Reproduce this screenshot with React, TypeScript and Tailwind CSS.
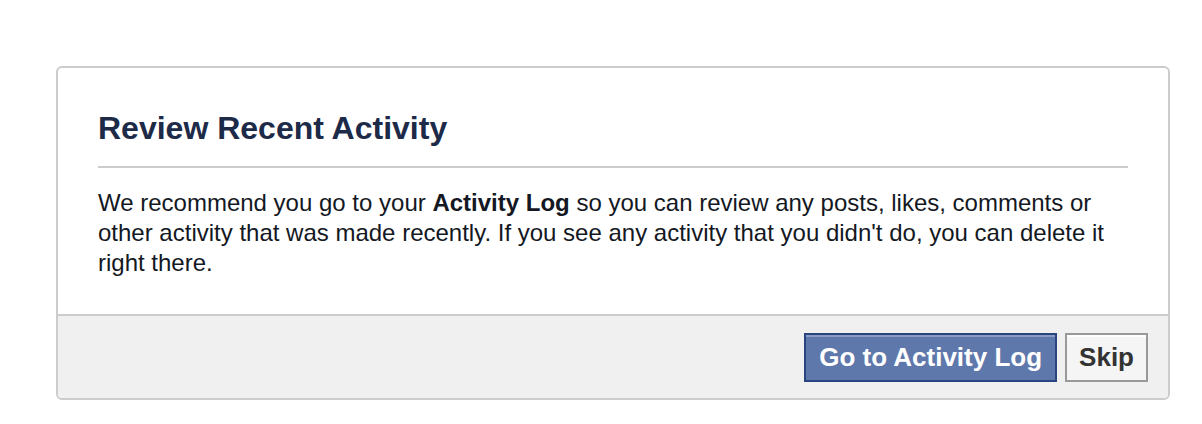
import React from "react";

export default function App() {
  return (
    <div className="w-[1202px] h-[424px] bg-white pt-[66px] pl-[56px]" style={{ fontFamily: '"Liberation Sans", Arial, sans-serif' }}>
      <div className="w-[1114px] h-[334px] border-2 border-[#cccccc] rounded-[6px] overflow-hidden flex flex-col bg-white">
        <div className="flex-1 px-[40px] pt-[41px]">
          <h1 className="text-[32px] leading-[38px] font-bold text-[#1d2a48] pb-[19px] border-b-2 border-[#cccccc]">Review Recent Activity</h1>
          <p className="mt-[20px] text-[24px] leading-[30px] text-[#141823]">
            We recommend you go to your <b className="font-bold">Activity Log</b> so you can review any posts, likes, comments or other activity that was made recently. If you see any activity that you didn't do, you can delete it right there.
          </p>
        </div>
        <div className="h-[84px] bg-[#f0f0f0] border-t-2 border-[#cccccc] flex items-center justify-end gap-[8px] pr-[20px]">
          <button className="h-[49px] px-[13px] border-2 border-[#29447e] bg-[#5f78ab] shadow-[inset_0_2px_0_#8a9cc2] text-white text-[26px] leading-[30px] font-bold">Go to Activity Log</button>
          <button className="h-[49px] px-[12px] border-2 border-[#999999] bg-[#f5f5f5] shadow-[inset_0_2px_0_#ffffff] text-[#333333] text-[26px] leading-[30px] font-bold">Skip</button>
        </div>
      </div>
    </div>
  );
}
